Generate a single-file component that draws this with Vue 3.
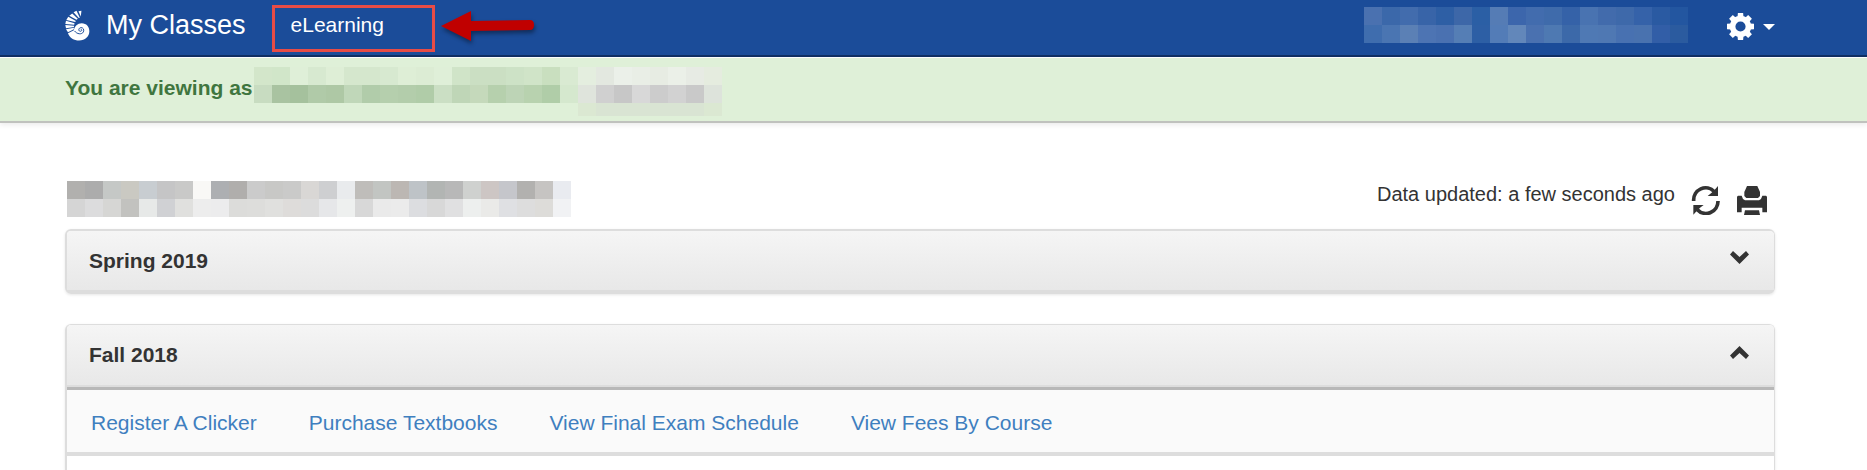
<script setup>
import { ref } from 'vue'

const springOpen = ref(false)
const fallOpen = ref(true)

const userCells = [
  '4a71b0 3b68aa 426cad 3864a8 2e5fa5 3d67a8 2b5fa5 557cb5 3c66ac 426cae 3f6bab 3562a8 4973b1 426bac 3e69aa 3562a9 2a5aa2 2356a0',
  '3f6dae 4a75b2 5b80b5 4d74b3 4a71b1 557eb5 2d5fa5 537cb7 6287ba 4a71b0 4e79b2 3c69a9 4f79b4 4f78b3 4871b1 4972af 325ea7 2b5b9f'
].join(' ').split(' ')

const viewerCells = [
  'd3e6ca d1e6c9 dfefd8 d7e9d0 deeed6 d5e7cd d5e7cd d7e9d0 deeed6 dcecd4 dfefd8 d0e4c8 cbdfc3 cbdfc3 cde2c6 d0e4c8 c9dfbf d9ead2 e4eedf e3e8e0 ebf0e9 e9eee6 e7ece3 ebf0e8 e7ebe4 e5ecdf',
  'c8dcc1 a9c3a1 a5c19d b0caa8 aec8a5 c0d7b9 b1ccaa b5cfad b3cdab b0cca8 cbdfc4 bfd6b7 c5d9bb b6d0ad bdd4b6 b8d2af b0cda8 d5e8ce dfe4dc d0d0d0 c7c7c7 d8d8d8 cccccc d2d2d2 c9c9c9 dde3db',
  Array(18).fill('dff0d8').join(' ') + ' dbe8d2 d9e4d3 d9e4d3 d9e4d3 d9e4d3 d9e4d3 d9e4d3 dbe8d2'
].join(' ').split(' ')

const nameCells = [
  'b1b0ae acacac c5c8c6 cac9c2 c8cdd1 c5c5c6 c9c9c8 f9f8f6 adafb2 b0aeac cbcbcb c8c8c6 cacac9 d9d7d5 cecfd1 e9ebed bfbdba c2c5c2 bcb7b3 bec3c7 b2b5b3 b8b8b8 cfd1cf cdc6c4 c5c6cb b2b1af c6c4c2 e9ebf0',
  'd5d5d5 dcdcdd d6d6d4 c2c2bf e7e9e8 d0d1d4 e0e0de ededed ececed dcdcda dddddb e0e0de dedcda dcdcdc e6e7e9 eef0ef d8d8d8 eaeaea ebebeb dcdde0 d8d8d8 e0e0e1 edefee eaeae8 dfe0e3 dddddd dddcd9 f1f2f4'
].join(' ').split(' ')

const links = ['Register A Clicker', 'Purchase Textbooks', 'View Final Exam Schedule', 'View Fees By Course']
const teeth = [0, 45, 90, 135, 180, 225, 270, 315]
</script>

<template>
  <div class="page">
    <header class="navbar">
      <a class="brand" href="#">
        <svg class="shell" viewBox="16 16 76 93" aria-hidden="true">
          <g fill="#fff">
            <path d="M57 19 66 18 64 35Z" />
            <path d="M42 22 51 18 61 39 58 40Z" />
            <path d="M29 33 38 26 55 42 51 45Z" />
            <path d="M20 46 26 36 49 49 47 52Z" />
            <path d="M17 58 19 48 45 56 44 60Z" />
            <path d="M19 71 17 61 44 63 43 67Z" />
            <path d="M25 83 19 74 43 69 43 74Z" />
            <path d="M25 86 43 77C45 65 54 56 67 56 81 56 90 67 90 80 90 96 77 108 59 108 43 108 31 101 25 86Z" />
          </g>
          <path d="M45 79C52 89 67 91 72 82 75 75 71 68 64 69 57 70 56 79 62 80 67 81 69 75 64 74" fill="none" stroke="#1b4c99" stroke-width="3" />
        </svg>
        <span>My Classes</span>
      </a>
      <nav class="main-nav" aria-label="Main">
        <a class="learning" href="#">eLearning</a>
        <svg class="arrow" viewBox="0 0 100 36" aria-hidden="true">
          <path d="M4 17 34 2V12L93 11Q97 11 97 16 97 21 93 21L34 22V32Z" fill="#c00000" />
        </svg>
      </nav>
      <div class="mosaic user" aria-hidden="true">
        <span v-for="(c, i) in userCells" :key="i" :style="{ background: '#' + c }"></span>
      </div>
      <button class="settings" type="button" aria-label="Settings">
        <svg class="gear" viewBox="-41 -41 82 82" aria-hidden="true">
          <path v-for="t in teeth" :key="t" d="M-9-28-8-41H8L9-28Z" :transform="`rotate(${t})`" fill="#fff" />
          <circle r="24" fill="none" stroke="#fff" stroke-width="17" />
        </svg>
        <svg class="caret" viewBox="0 0 12 6" aria-hidden="true"><path d="M0 0H12L6 6Z" fill="#fff" /></svg>
      </button>
    </header>

    <div class="notice" role="status">
      <strong>You are viewing as</strong>
      <div class="mosaic viewer" aria-hidden="true">
        <span v-for="(c, i) in viewerCells" :key="i" :style="{ background: '#' + c }"></span>
      </div>
    </div>

    <main class="content">
      <div class="toolbar">
        <div class="mosaic name" aria-hidden="true">
          <span v-for="(c, i) in nameCells" :key="i" :style="{ background: '#' + c }"></span>
        </div>
        <span class="updated">Data updated: a few seconds ago</span>
        <button type="button" aria-label="Refresh" class="tool">
          <svg viewBox="0 0 90 90" aria-hidden="true">
            <path d="M8 48A36 37 0 0 1 70 20M81 48A36 37 0 0 1 19 74" fill="none" stroke="#333" stroke-width="11" />
            <path d="M81 3V33H50L60 25 68 18Z M7 89V60H38L29 67 20 75Z" fill="#333" />
          </svg>
        </button>
        <button type="button" aria-label="Print" class="tool">
          <svg viewBox="0 0 90 90" aria-hidden="true" fill="#333">
            <path d="M30 3H61L69 21V33L63 39H28L22 33V21Z" />
            <path d="M3 32H14L18 42 24 46H66L72 42 76 32H87L90 35V82H76V68H14V82H0V35Z" />
            <path d="M24 76H66L69 90H21Z" />
          </svg>
        </button>
      </div>

      <section class="panel closed">
        <h2>
          <button type="button" :aria-expanded="springOpen" @click="springOpen = !springOpen">
            <span>Spring 2019</span>
            <svg class="chevron" viewBox="0 0 19 13" aria-hidden="true"><path d="M3 0 9.500 6 16 0 19 3.500 9.500 13 0 3.500Z" fill="#333" /></svg>
          </button>
        </h2>
      </section>

      <section class="panel open">
        <h2>
          <button type="button" :aria-expanded="fallOpen" @click="fallOpen = !fallOpen">
            <span>Fall 2018</span>
            <svg class="chevron" viewBox="0 0 19 13" aria-hidden="true"><path d="M3 13 9.500 7 16 13 19 9.500 9.500 0 0 9.500Z" fill="#333" /></svg>
          </button>
        </h2>
        <nav v-if="fallOpen" class="links" aria-label="Fall 2018">
          <a v-for="l in links" :key="l" href="#">{{ l }}</a>
        </nav>
      </section>
    </main>
  </div>
</template>

<style>
body { margin: 0; background: #fff; }
</style>

<style scoped>
.page {
  min-height: 100vh;
  display: flex;
  flex-direction: column;
  font-family: "Liberation Sans", Arial, sans-serif;
  font-size: 21px;
  line-height: 30px;
  color: #333;
}
.page * { box-sizing: border-box; }
a { text-decoration: none; }
button { font: inherit; color: inherit; border: 0; background: none; padding: 0; cursor: pointer; }
svg { display: block; flex: none; }

.mosaic { display: grid; flex: none; }
.user { grid-template: repeat(2, 18px) / repeat(18, 18px); }
.viewer { grid-template: 18px 18px 13px / repeat(26, 18px); }
.name { grid-template: repeat(2, 18px) / repeat(28, 18px); }

.navbar {
  display: flex;
  align-items: flex-start;
  height: 57px;
  padding: 0 92px 0 65px;
  background: #1b4c99;
  border-bottom: 2px solid #102f63;
}
.brand { display: flex; align-items: flex-start; gap: 16px; padding-top: 10px; color: #fff; font-size: 27px; }
.shell { width: 25px; height: 31px; }
.main-nav { display: flex; align-items: flex-start; gap: 2px; margin: 5px auto 0 26px; }
.learning { width: 163px; height: 47px; padding: 2px 16px; border: 3px solid #e74c46; color: #fff; }
.arrow { width: 100px; height: 36px; margin-top: 4px; filter: drop-shadow(1px 3px 2px rgba(0, 0, 0, .4)); }
.user { margin-top: 7px; }
.settings { display: flex; align-items: center; gap: 9px; margin: 13px 0 0 39px; }
.gear { width: 27px; height: 27px; }
.caret { width: 12px; height: 6px; }

.notice {
  display: flex;
  align-items: flex-start;
  gap: 1px;
  height: 65px;
  margin-top: 1px;
  padding: 9px 92px 0 65px;
  background: #dff0d8;
  border-bottom: 2px solid #c0c2be;
  box-shadow: 0 2px 5px rgba(0, 0, 0, .08);
  color: #3f763f;
}
.notice strong { padding-top: 6px; line-height: 30px; }

.content { flex: 1; display: flex; flex-direction: column; padding: 58px 92px 0 65px; }
.toolbar { display: flex; align-items: flex-start; height: 48px; padding: 0 8px 0 2px; }
.updated { margin-left: auto; font-size: 20px; line-height: 26px; }
.tool { width: 30px; height: 30px; margin: 4px 0 0 16px; }
.tool svg { width: 30px; height: 30px; }

.panel { border: 2px solid #ddd; border-right-width: 1px; border-radius: 6px; box-shadow: 0 1px 3px rgba(0, 0, 0, .1); }
.panel h2 { margin: 0; font-size: 21px; }
.panel h2 button {
  display: flex;
  justify-content: space-between;
  align-items: center;
  width: 100%;
  height: 59px;
  padding: 0 25px 0 22px;
  border-radius: 4px 4px 0 0;
  background: linear-gradient(#f5f5f5, #e8e8e8);
  font-weight: bold;
}
.chevron { width: 19px; height: 13px; margin-bottom: 6px; }
.closed { border-bottom-width: 4px; margin-bottom: 30px; }
.open { flex: 1; border-top-width: 1px; border-bottom: 0; border-radius: 6px 6px 0 0; }
.open h2 { border-bottom: 3px solid #b8b8b8; }
.open h2 button { height: 62px; border-bottom: 2px solid #ddd; }
.links {
  display: flex;
  flex-wrap: wrap;
  gap: 0 52px;
  padding: 18px 24px 14px;
  background: #fafafa;
  border-bottom: 4px solid #ddd;
}
.links a { color: #3f7fbf; }
</style>
